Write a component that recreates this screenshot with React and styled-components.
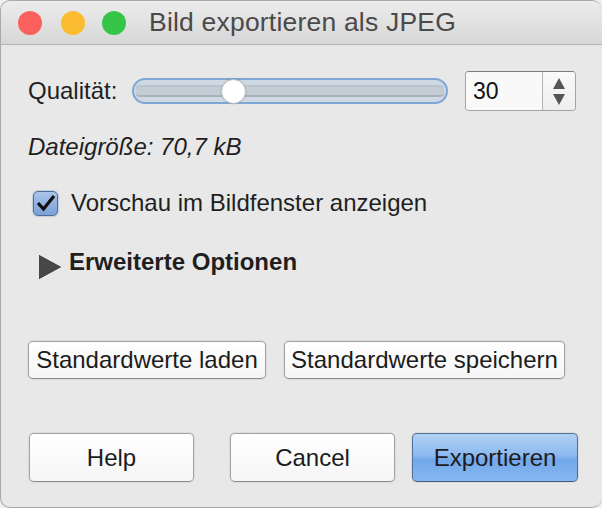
import React from 'react';
import styled, { createGlobalStyle } from 'styled-components';

const Global = createGlobalStyle`
  html, body {
    margin: 0;
    padding: 0;
    background: #efefef;
  }
  body {
    font-family: "Liberation Sans", Arial, Helvetica, sans-serif;
    color: #1f1f1f;
  }
`;

const Window = styled.div`
  width: 602px;
  height: 508px;
  box-sizing: border-box;
  border: 1px solid #a9a9a9;
  border-right: none;
  border-radius: 10px;
  overflow: hidden;
  background: #e8e8e8;
  display: flex;
  flex-direction: column;
`;

const TitleBar = styled.div`
  height: 43px;
  flex: none;
  display: flex;
  align-items: center;
  padding-left: 17px;
  background: linear-gradient(#ececec, #d7d7d7);
  border-bottom: 1px solid #b4b4b4;
`;

const Light = styled.span`
  width: 24px;
  height: 24px;
  border-radius: 50%;
  background: ${p => p.$color};
  margin-right: ${p => p.$gap}px;
  flex: none;
`;

const Title = styled.div`
  font-size: 26.5px;
  color: #4a4a4a;
  margin-left: 23px;
  letter-spacing: 0.2px;
`;

const Content = styled.div`
  display: flex;
  flex-direction: column;
  padding: 0 0 0 27px;
  font-size: 24px;
  line-height: 28px;
`;

const QualityRow = styled.div`
  display: flex;
  align-items: center;
  height: 40px;
  margin-top: 26px;
`;

const Label = styled.span`
  width: 104px;
  flex: none;
`;

const Slider = styled.div`
  position: relative;
  width: 316px;
  height: 26px;
  box-sizing: border-box;
  border: 2px solid #7ea7d6;
  border-radius: 13px;
  background: #cfd9e4;
  display: flex;
  align-items: center;
  flex: none;
`;

const Track = styled.div`
  flex: 1;
  margin: 0 2px;
  height: 8px;
  border-top: 2px solid #bcc5ce;
  border-bottom: 2px solid #a9b1ba;
  background: #c3ccd5;
  border-radius: 4px;
`;

const Thumb = styled.div`
  position: absolute;
  top: 50%;
  width: 23px;
  height: 23px;
  margin-top: -12px;
  border-radius: 50%;
  background: #fff;
  border: 1px solid #b9b9b9;
  box-shadow: 0 0 1px 1px rgba(0, 0, 0, 0.06);
`;

const Spin = styled.div`
  display: flex;
  margin-left: 17px;
  height: 40px;
  width: 111px;
  box-sizing: border-box;
  border: 1px solid #a4a4a4;
  border-top-color: #7c7c7c;
  border-radius: 4px;
  background: #f6f6f6;
  overflow: hidden;
`;

const SpinValue = styled.div`
  flex: 1;
  padding-left: 7px;
  display: flex;
  align-items: center;
  font-size: 23px;
  color: #111;
  background: #f9f9f9;
`;

const Stepper = styled.div`
  width: 32px;
  border-left: 1px solid #b3b3b3;
  display: flex;
  flex-direction: column;
  align-items: center;
  justify-content: center;
  gap: 5px;
  background: linear-gradient(#fafafa, #eeeeee);
`;

const Arrow = styled.div`
  width: 0;
  height: 0;
  border-left: 6px solid transparent;
  border-right: 6px solid transparent;
  ${p => (p.$down ? 'border-top: 11px solid #555;' : 'border-bottom: 11px solid #555;')}
`;

const SizeText = styled.div`
  font-style: italic;
  margin-top: 22px;
`;

const CheckRow = styled.div`
  display: flex;
  align-items: center;
  margin-top: 28px;
  height: 28px;
`;

const Box = styled.div`
  width: 25px;
  height: 25px;
  margin-left: 5px;
  margin-right: 13px;
  box-sizing: border-box;
  border: 1px solid #4c6d99;
  border-radius: 5px;
  background: linear-gradient(#a9c4e8, #7aa2d6);
  box-shadow: 0 0 1px 1px rgba(80, 120, 180, 0.25);
  display: flex;
  align-items: center;
  justify-content: center;
  flex: none;
`;

const OptionsRow = styled.div`
  display: flex;
  align-items: center;
  margin-top: 30px;
  height: 30px;
  font-weight: bold;
`;

const Triangle = styled.div`
  width: 0;
  height: 0;
  margin: 9px 8px 0 11px;
  border-top: 12px solid transparent;
  border-bottom: 12px solid transparent;
  border-left: 22px solid #474747;
  filter: drop-shadow(0 0 0.5px #222);
`;

const DefaultsRow = styled.div`
  display: flex;
  gap: 18px;
  margin-top: 64px;
`;

const Button = styled.button`
  font-family: "Liberation Sans", Arial, sans-serif;
  font-size: 24px;
  color: #1c1c1c;
  width: ${p => p.$w}px;
  height: ${p => p.$h}px;
  padding: 0;
  box-sizing: border-box;
  border: 1px solid #a2a2a2;
  border-bottom-color: #8a8a8a;
  border-radius: 5px;
  background: linear-gradient(#ffffff, #f5f5f5);
  box-shadow: 0 0 1px 1px rgba(0, 0, 0, 0.06);
  flex: none;
`;

const PrimaryButton = styled(Button)`
  border-color: #4f6e98;
  border-bottom-color: #3f5c85;
  background: linear-gradient(#b2d0f4 0%, #8dbaf0 45%, #72a7ea 55%, #87b8f2 100%);
`;

const ActionRow = styled.div`
  display: flex;
  margin-top: 54px;
  margin-left: 1px;
`;

export default function App() {
  const value = 30;
  const thumbLeft = (value / 100) * 290;

  return (
    <>
      <Global />
      <Window>
        <TitleBar>
          <Light $color="#fc605c" $gap={19} />
          <Light $color="#fbbc2f" $gap={17} />
          <Light $color="#35c649" $gap={0} />
          <Title>Bild exportieren als JPEG</Title>
        </TitleBar>
        <Content>
          <QualityRow>
            <Label>Qualität:</Label>
            <Slider>
              <Track />
              <Thumb style={{ left: thumbLeft }} />
            </Slider>
            <Spin>
              <SpinValue>30</SpinValue>
              <Stepper>
                <Arrow />
                <Arrow $down />
              </Stepper>
            </Spin>
          </QualityRow>
          <SizeText>Dateigröße: 70,7 kB</SizeText>
          <CheckRow>
            <Box>
              <svg width="20" height="18" viewBox="0 0 20 18">
                <path d="M2 9 L7.5 15 L18 2" fill="none" stroke="#111" strokeWidth="3.2" strokeLinejoin="miter" />
              </svg>
            </Box>
            Vorschau im Bildfenster anzeigen
          </CheckRow>
          <OptionsRow>
            <Triangle />
            Erweiterte Optionen
          </OptionsRow>
          <DefaultsRow>
            <Button $w={238} $h={38}>Standardwerte laden</Button>
            <Button $w={281} $h={38}>Standardwerte speichern</Button>
          </DefaultsRow>
          <ActionRow>
            <Button $w={165} $h={49}>Help</Button>
            <Button $w={165} $h={49} style={{ marginLeft: 36 }}>Cancel</Button>
            <PrimaryButton $w={166} $h={49} style={{ marginLeft: 17 }}>Exportieren</PrimaryButton>
          </ActionRow>
        </Content>
      </Window>
    </>
  );
}
